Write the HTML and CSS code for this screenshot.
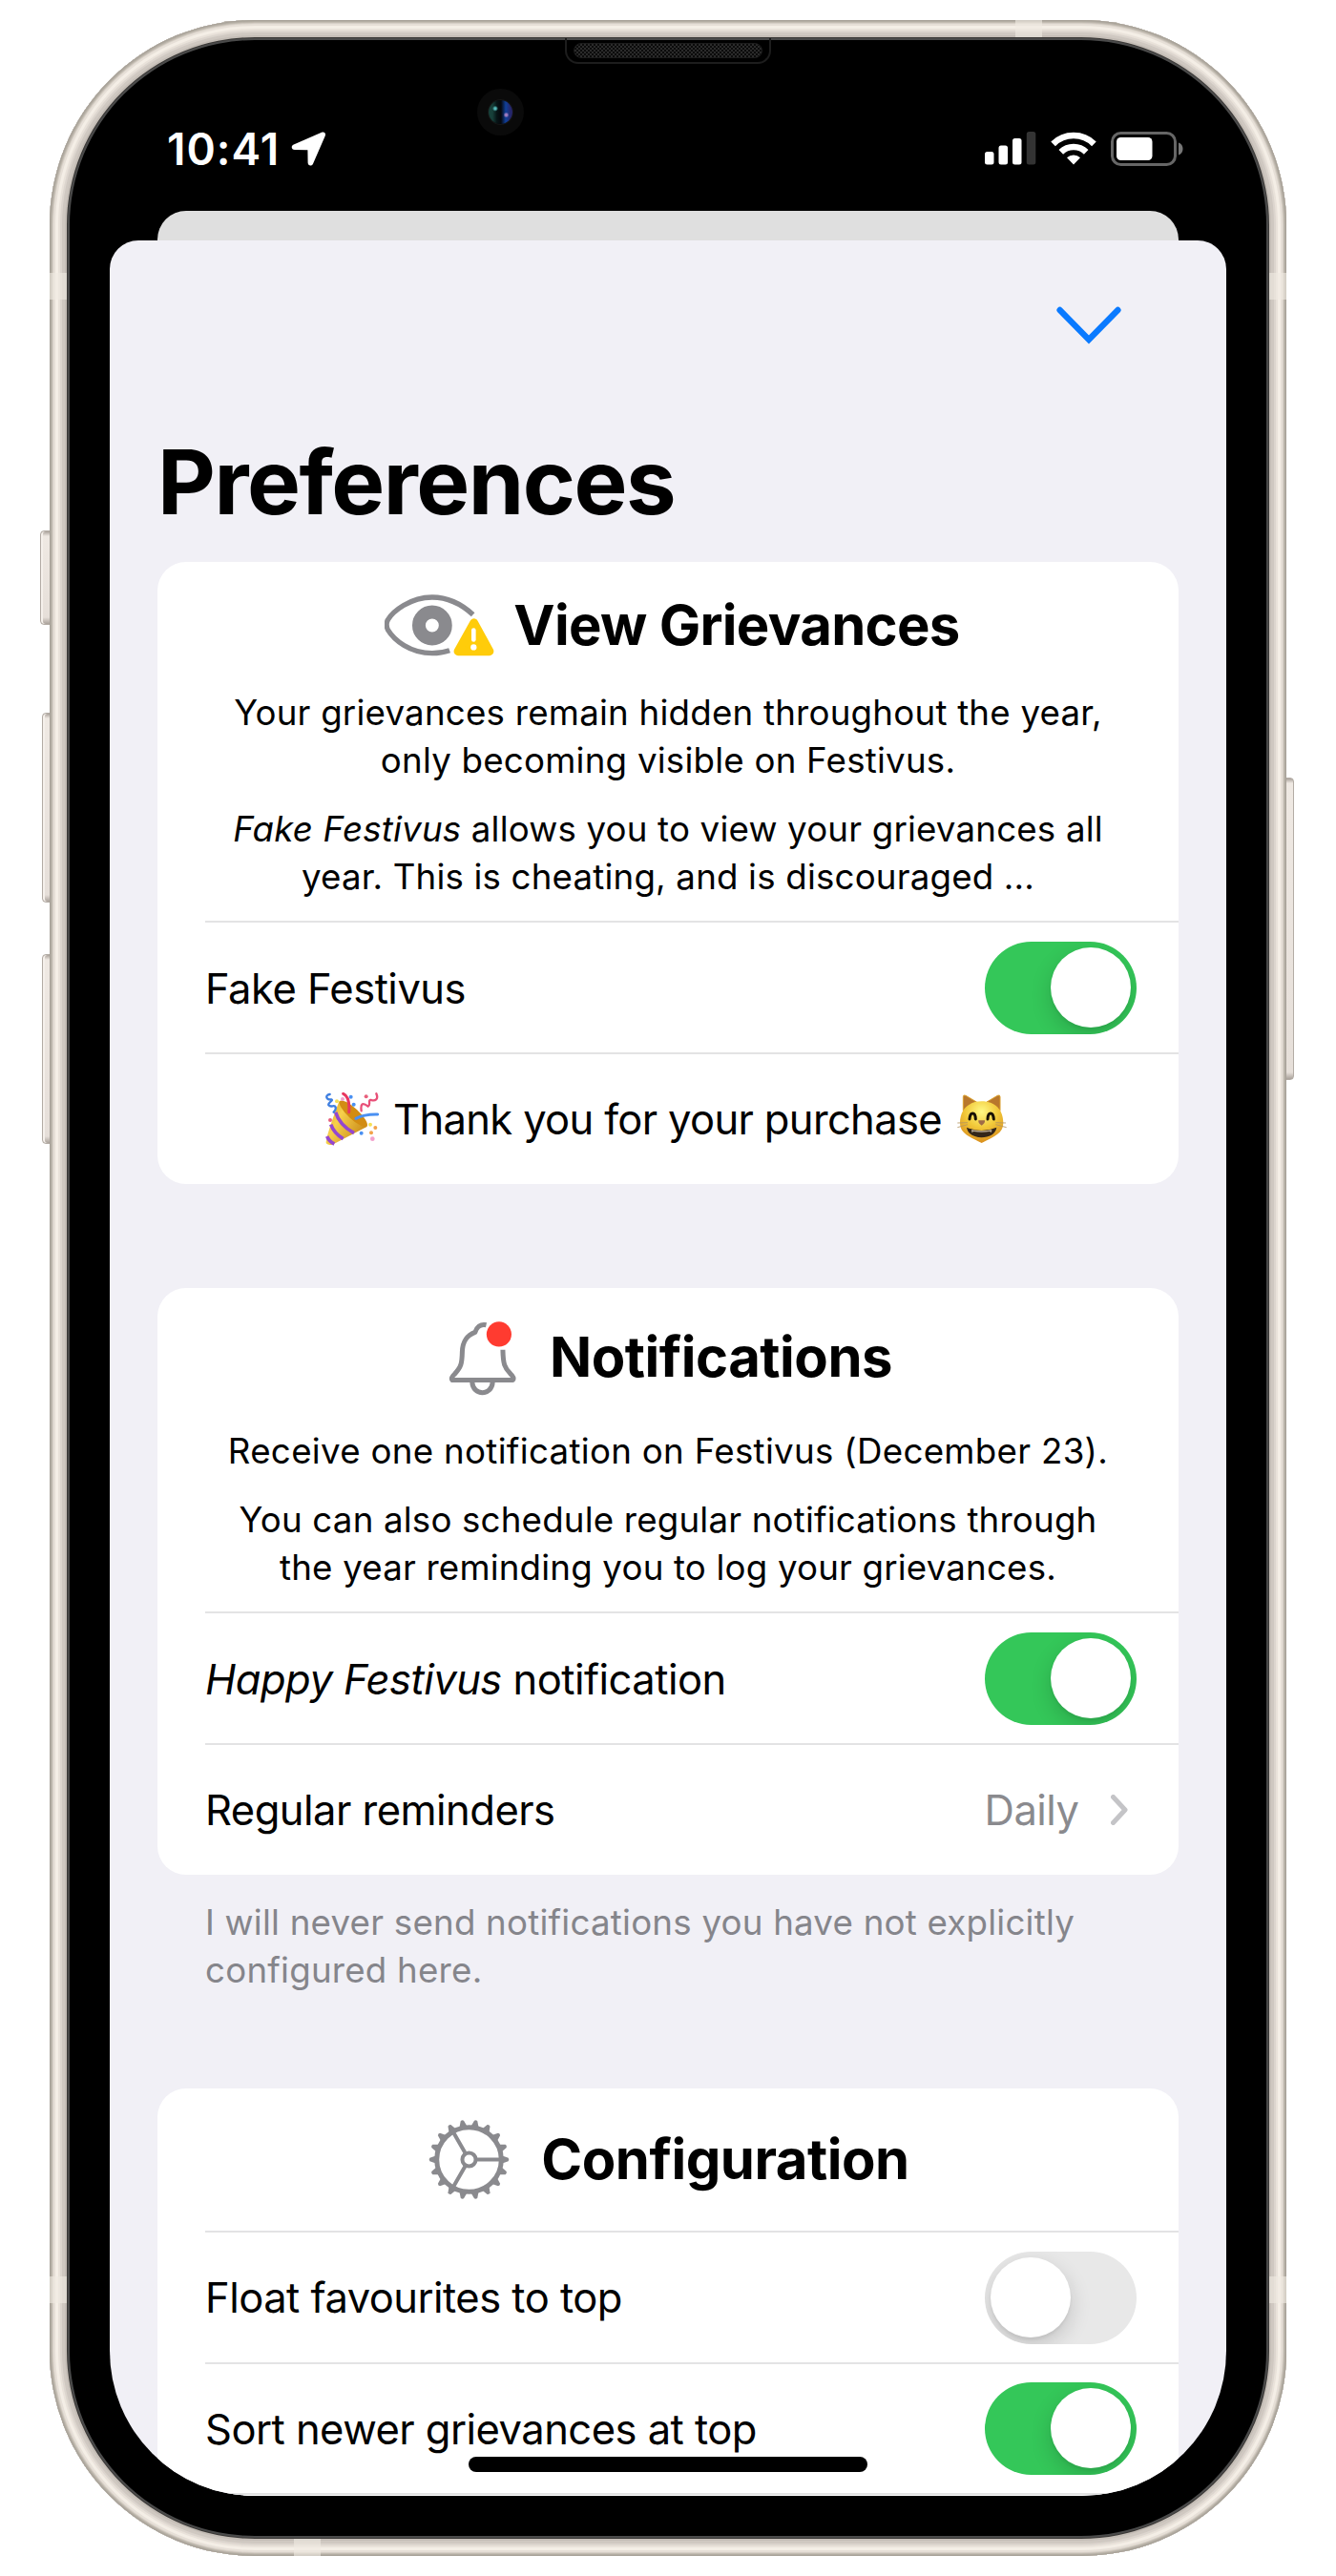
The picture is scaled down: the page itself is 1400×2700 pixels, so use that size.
FILE: index.html
```html
<!DOCTYPE html>
<html lang="en">
<head>
<meta charset="utf-8">
<title>Preferences</title>
<link rel="stylesheet" href="styles.css">
</head>
<body>
<div class="phone">
  <i class="key key-mute"></i><i class="key key-up"></i><i class="key key-down"></i><i class="key key-power"></i>
  <i class="band band-l band-hi"></i><i class="band band-r band-hi"></i>
  <i class="band band-l band-lo"></i><i class="band band-r band-lo"></i>
  <i class="band band-t"></i><i class="band band-b"></i>
  <div class="speaker"><i></i></div>
  <div class="camera"><i></i></div>

  <header class="status">
    <div class="status-left">
      <span class="time">10:41</span>
      <svg class="locate" viewBox="0 0 36 36"><path d="M31.5 .8C34.300 -.4 36.300 1.500 35.200 4.400L22.600 33.600C21.300 36.700 17.200 36.100 17.100 32.600L16.900 19.300L3.300 19C-.2 18.900 -1 14.900 2.300 13.400Z" fill="#fff"/></svg>
    </div>
    <div class="status-right">
      <svg class="signal" viewBox="0 0 54 35"><g fill="#fff"><rect x="0" y="21" width="9.500" height="13.500" rx="2.500"/><rect x="14.500" y="14.500" width="9.500" height="20" rx="2.500"/><rect x="29" y="7" width="9.500" height="27.500" rx="2.500"/></g><rect x="43.800" y="0" width="9.500" height="34.500" rx="2.500" fill="#333"/></svg>
      <svg class="wifi" viewBox="0 0 48 35"><g fill="none" stroke="#fff"><path d="M2.600 12.800A30.500 30.500 0 0 1 45.400 12.800" stroke-width="6.600"/><path d="M10.800 21.300A19 19 0 0 1 37.200 21.300" stroke-width="6.600"/></g><path d="M24 34.500L17 27.300A10 10 0 0 1 31 27.300Z" fill="#fff"/></svg>
      <svg class="battery" viewBox="0 0 77 36"><rect x="1.500" y="1.500" width="66" height="33" rx="9" fill="none" stroke="#666" stroke-width="3"/><rect x="6" y="6" width="37.500" height="24" rx="4.500" fill="#fff"/><path d="M71 11.500C77 13.500 77 22.500 71 24.500Z" fill="#777"/></svg>
    </div>
  </header>

  <div class="sheet-behind"></div>
  <main class="sheet">
    <div class="toolbar">
      <svg class="close" viewBox="0 0 68 40"><path d="M3.600 4L34 35L64.400 4" fill="none" stroke="#0a7aff" stroke-width="6.400" stroke-linecap="round" stroke-linejoin="miter"/></svg>
    </div>
    <h1>Preferences</h1>

    <section class="card">
      <div class="head head-view">
        <svg class="eye" viewBox="70 70 346 196">
          <path d="M349 134C310 98 268 79 220 79C150 79 96 124 80 150Q72 166 80 182C100 215 150 256 220 256C242 256 258 253 275 247" fill="none" stroke="#8a8a8e" stroke-width="16"/>
          <circle cx="220" cy="168" r="42" fill="none" stroke="#8a8a8e" stroke-width="42"/>
          <path d="M352 160L302 250H401Z" fill="#ffcc0a" stroke="#ffcc0a" stroke-width="27" stroke-linejoin="round"/>
          <path d="M351 183V213" stroke="#fff" stroke-width="14" stroke-linecap="round"/><circle cx="351" cy="237" r="9.500" fill="#fff"/>
        </svg>
        <h2>View Grievances</h2>
      </div>
      <p class="t1">Your grievances remain hidden throughout the year,<br>only becoming visible on Festivus.</p>
      <p class="t2"><em>Fake Festivus</em> allows you to view your grievances all<br>year. This is cheating, and is discouraged ...</p>
      <div class="row"><span>Fake Festivus</span><span class="toggle on"></span></div>
      <div class="row thanks">
        <svg class="party" viewBox="62 76 168 168">
          <defs><linearGradient id="cone" x1="0" y1="0" x2="1" y2=".6"><stop offset="0" stop-color="#d99b1c"/><stop offset=".4" stop-color="#f7d04b"/><stop offset="1" stop-color="#c98a18"/></linearGradient></defs>
          <path d="M106 102C98 122 62 218 64 236Q72 244 84 240L192 184C200 170 130 100 106 102Z" fill="url(#cone)"/>
          <ellipse cx="150" cy="143" rx="58" ry="17" transform="rotate(43 150 143)" fill="#d28c12"/>
          <g fill="none" stroke="#9447cf" stroke-width="11"><path d="M94 138Q106 178 152 204"/><path d="M79 177Q90 206 118 222"/><path d="M67 214Q73 230 90 238"/></g>
          <g fill="none" stroke-width="7" stroke-linecap="round"><path d="M118 80Q140 90 136 138" stroke="#e8375f" stroke-width="9"/><path d="M158 158Q184 144 226 145" stroke="#4a90f2" stroke-width="9"/><path d="M76 82C60 84 64 100 80 98C90 100 68 108 72 116C80 126 90 112 94 122Q96 130 88 138" stroke="#3f7fe0"/><path d="M222 80C230 98 218 104 206 100C194 98 206 116 196 120C178 106 172 112 175 134" stroke="#e85078"/></g>
          <g fill="#4a90f2"><circle cx="142" cy="90" r="6"/><circle cx="151" cy="114" r="6"/><circle cx="175" cy="204" r="6"/></g><g fill="#f5e054"><circle cx="98" cy="104" r="6"/><circle cx="203" cy="177" r="6"/></g><g fill="#e8607c"><circle cx="77" cy="163" r="6"/><circle cx="190" cy="89" r="6"/></g><g fill="#f2a24a"><circle cx="219" cy="187" r="6"/><circle cx="206" cy="203" r="6"/></g><circle cx="210" cy="222" r="7" fill="#f2a0cc"/><circle cx="116" cy="97" r="6" fill="#f2a0cc"/>
        </svg>
        <span>Thank you for your purchase</span>
        <svg class="cat" viewBox="68 560 162 156">
          <defs><radialGradient id="fur" cx=".5" cy=".25" r=".75"><stop offset="0" stop-color="#fff985"/><stop offset=".5" stop-color="#f2c93a"/><stop offset="1" stop-color="#d98e1c"/></radialGradient></defs>
          <path d="M90 612V568Q90 560 98 564L132 584ZM206 612V568Q206 560 198 564L164 584Z" fill="#b8772c" stroke="#dba02c" stroke-width="3"/>
          <path d="M148 582C190 582 216 608 216 650C216 682 190 692 148 713C106 692 80 682 80 650C80 608 106 582 148 582Z" fill="url(#fur)"/>
          <g fill="none" stroke="#171005" stroke-width="9" stroke-linecap="round"><path d="M110 638C112 614 128 614 129 638"/><path d="M167 638C168 614 184 614 186 638"/></g>
          <path d="M138 642H158Q160 650 148 658Q136 650 138 642Z" fill="#a06c47"/>
          <path d="M101 664Q148 684 195 664C190 706 106 706 101 664Z" fill="#332619"/><path d="M116 671Q148 679 180 671L179 680L173 677Q148 681 123 677L117 680Z" fill="#b5a68f"/>
          <path d="M104 649L72 650M104 655L72 664M192 649L224 650M192 655L226 664" stroke="#b59560" stroke-width="2.500"/>
        </svg>
      </div>
    </section>

    <section class="card second">
      <div class="head head-bell">
        <svg class="bell" viewBox="60 70 212 236">
          <g fill="none" stroke="#8a8a8e" stroke-width="15" stroke-linejoin="round"><path d="M178 84C160 80 148 91 143 107C112 119 104 141 103 168C102 207 99 216 79 238Q66 250 72 257H261Q268 250 253 236C235 217 231 207 230 162"/><path d="M134 263C136 307 196 307 198 263"/></g>
          <circle cx="218" cy="113" r="39" fill="#ff3b30"/>
        </svg>
        <h2>Notifications</h2>
      </div>
      <p class="t3">Receive one notification on Festivus (December 23).</p>
      <p class="t4">You can also schedule regular notifications through<br>the year reminding you to log your grievances.</p>
      <div class="row"><span><em>Happy Festivus</em> notification</span><span class="toggle on"></span></div>
      <div class="row"><span>Regular reminders</span><span class="value">Daily<svg class="more" viewBox="0 0 18 32"><path d="M2.500 2.500L15 16L2.500 29.500" fill="none" stroke="#c4c4c7" stroke-width="5" stroke-linecap="round" stroke-linejoin="round"/></svg></span></div>
    </section>
    <p class="note">I will never send notifications you have not explicitly<br>configured here.</p>

    <section class="card third">
      <div class="head head-gear">
        <svg class="gear" viewBox="-127 -127 254 254">
          <defs><path id="tooth" d="M102 -13L123 -5Q127 0 123 5L102 13Z"/><g id="teeth"><use href="#tooth"/><use href="#tooth" transform="rotate(20)"/><use href="#tooth" transform="rotate(40)"/></g></defs>
          <g fill="#8a8a8e"><use href="#teeth"/><use href="#teeth" transform="rotate(60)"/><use href="#teeth" transform="rotate(120)"/><use href="#teeth" transform="rotate(180)"/><use href="#teeth" transform="rotate(240)"/><use href="#teeth" transform="rotate(300)"/></g>
          <g fill="none" stroke="#8a8a8e" stroke-width="12"><circle r="101" stroke-width="15"/><circle r="21"/><path d="M25 0H98M-12.500 21.700L-49 85M-12.500 -21.700L-49 -85"/></g>
        </svg>
        <h2>Configuration</h2>
      </div>
      <div class="row"><span>Float favourites to top</span><span class="toggle"></span></div>
      <div class="row"><span>Sort newer grievances at top</span><span class="toggle on"></span></div>
      <div class="row"></div>
    </section>
    <i class="home"></i>
  </main>
</div>
</body>
</html>
```
FILE: styles.css
```css
* { box-sizing: border-box; }
body { margin: 0; background: #fff; color: #000; font-family: Inter, "Liberation Sans", sans-serif; }
h1, h2, p { margin: 0; }

.phone {
  position: relative;
  width: 1296px;
  height: 2658px;
  margin: 21px auto 0;
  padding: 0 63px;
  border-radius: 215px;
  background: #000;
  box-shadow:
    inset 0 0 0 1px #a8a299,
    inset 0 0 0 2px #b3ada3,
    inset 0 0 0 3px #c2bbb1,
    inset 0 0 0 4px #d6cfc6,
    inset 0 0 0 6px #e6dfd7,
    inset 0 0 0 9px #f4eee6,
    inset 0 0 0 11px #e9e2da,
    inset 0 0 0 13px #dcd5ce,
    inset 0 0 0 16px #cfc8c1,
    inset 0 0 0 18px #c4bdb6,
    inset 0 0 0 19px #3b3937,
    inset 0 0 0 21px #4a4a4a;
}

/* hardware keys and antenna bands */
.key { position: absolute; z-index: -1; width: 14px; border: 1px solid #b3aca5; border-radius: 4px; background: linear-gradient(#a9a19a, #efe9e3 5px, #e6dfd9 calc(100% - 7px), #a9a19a); box-shadow: inset 2px 0 #f5f0eb; }
.key-mute { left: -10px; top: 535px; height: 99px; }
.key-up { left: -8px; top: 726px; height: 199px; }
.key-down { left: -8px; top: 979px; height: 199px; }
.key-power { right: -8px; top: 794px; height: 317px; }
.band { position: absolute; background: rgba(240, 235, 227, .6); }
.band-l, .band-r { width: 18px; height: 28px; }
.band-l { left: 0; }
.band-r { right: 0; }
.band-hi { top: 265px; }
.band-lo { top: 2365px; }
.band-t, .band-b { width: 28px; height: 18px; }
.band-t { left: 1012px; top: 0; }
.band-b { left: 256px; bottom: 0; }

.speaker { position: absolute; left: 540px; top: 19px; width: 216px; height: 27px; padding: 5px 7px; border: 2px solid #1d1d1d; border-top: 0; border-radius: 0 0 14px 14px; }
.speaker i { display: block; height: 16px; border: 1px solid #1c1c1c; border-radius: 8px; background: repeating-conic-gradient(#2b2b2b 0 25%, #0b0b0b 0 50%) 0 0 / 4px 4px; }
.camera { position: absolute; left: 448px; top: 72px; width: 49px; height: 49px; padding: 12px; border-radius: 50%; background: #0a0a0a; }
.camera i { display: block; height: 25px; border-radius: 50%; background: radial-gradient(circle at 74% 62%, #a07cc0 0 1px, transparent 3px), radial-gradient(circle at 28% 35%, #5bb 0 1px, transparent 3px), linear-gradient(90deg, #17403a 0 16%, #071517 34%, #05070c 52%, #10409a 72%, #26266a 92%); box-shadow: 0 0 0 1px #161616; }

.status { display: flex; justify-content: space-between; height: 200px; padding: 117px 44px 0 60px; }
.status-left { display: flex; height: 36px; align-items: center; }
.time { width: 130px; color: #fff; font-size: 46px; font-weight: 600; line-height: 36px; letter-spacing: 1px; white-space: nowrap; }
.locate { width: 37px; height: 36px; }
.status-right { display: flex; gap: 15px; height: 36px; align-items: flex-start; }
.signal { width: 54px; height: 35px; }
.wifi { width: 48px; height: 35px; }
.battery { width: 77px; height: 36px; }

.sheet-behind { height: 31px; margin: 0 50px; border-radius: 30px 30px 0 0; background: #dfdfdf; }
.sheet { position: relative; height: 2364px; overflow: hidden; padding: 0 50px; border-radius: 30px 30px 152px 152px; background: #f1f0f6; }
.toolbar { display: flex; justify-content: flex-end; height: 188px; padding: 69px 60px 0 0; }
.close { width: 68px; height: 40px; }
h1 { height: 149px; font-size: 94px; font-weight: 700; line-height: 130px; letter-spacing: -1.5px; white-space: nowrap; }

.card { height: 652px; overflow: hidden; border-radius: 30px; background: #fff; text-align: center; }
.second { height: 615px; margin-top: 109px; }
.third { height: 563px; }
.head { display: flex; justify-content: center; align-items: center; height: 133px; }
.head svg { flex: none; }
h2 { font-size: 58px; font-weight: 700; line-height: 70px; letter-spacing: -.5px; white-space: nowrap; transform: translateY(-1px); }
.head-view { gap: 20px; padding-left: 9px; }
.head-view h2 { letter-spacing: -.7px; }
.head-bell { height: 146px; gap: 35px; padding-left: 5px; }
.head-gear { height: 149px; gap: 33px; padding-left: 2px; }
.eye { width: 115px; height: 65px; }
.bell { width: 71px; height: 79px; }
.gear { width: 85px; height: 85px; }
.card p { height: 122px; font-size: 36.7px; line-height: 49.7px; letter-spacing: .22px; white-space: nowrap; }
.card .t2, .card .t4 { height: 121px; letter-spacing: .18px; }
.card .t3 { height: 72px; letter-spacing: .3px; }

.row { display: flex; align-items: center; justify-content: space-between; height: 137.5px; margin-left: 50px; padding: 2px 44.5px 0 0; border-top: 2px solid #e3e3e4; font-size: 43.5px; letter-spacing: -.52px; white-space: nowrap; }
.third .row { padding-top: 1px; }
.thanks { justify-content: flex-start; padding-left: 126px; gap: 15px; letter-spacing: -.65px; }
.party { width: 56px; height: 56px; }
.cat { width: 54px; height: 52px; }
.toggle { width: 159px; height: 97px; padding: 6px; border-radius: 49px; background: #e8e8e8; overflow: hidden; }
.toggle::before { content: ""; display: block; width: 84px; height: 84px; border-radius: 50%; background: #fff; box-shadow: 0 8px 22px rgba(0, 0, 0, .16), 0 3px 3px rgba(0, 0, 0, .05); }
.toggle.on { background: #34c759; }
.toggle.on::before { margin-left: auto; }
.value { display: flex; align-items: center; gap: 33px; padding-right: 9px; color: #8a8a8e; }
.more { width: 18px; height: 32px; }
.note { height: 224px; padding: 25px 50px 0; color: #85858b; font-size: 36.7px; line-height: 49.7px; letter-spacing: .22px; white-space: nowrap; }
.home { position: absolute; left: 376px; bottom: 25px; width: 418px; height: 16px; border-radius: 8px; background: #000; }
```
